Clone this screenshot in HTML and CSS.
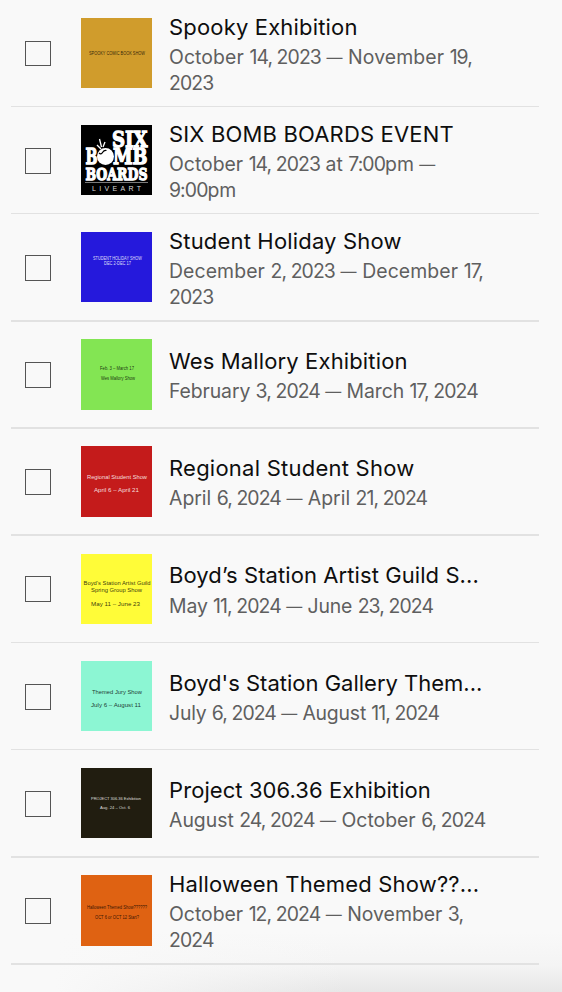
FILE: index.html
```html
<!DOCTYPE html>
<html lang="en">
<head>
<meta charset="utf-8">
<title>Events</title>
<link rel="stylesheet" href="styles.css">
</head>
<body>
<ul class="events">
  <li class="event wrapped">
    <span class="check short"></span>
    <svg class="thumb" viewBox="0 0 71 70"><rect width="71" height="70" fill="#d09c2c"/><text class="dark" x="8" y="37" font-size="4.5" textLength="56" lengthAdjust="spacingAndGlyphs">SPOOKY COMIC BOOK SHOW</text></svg>
    <div class="info"><h2 class="t1">Spooky Exhibition</h2><p class="d1">October <span class="n">14, 2023</span> <i>—</i> November <span class="n">19,</span><br><span class="n">2023</span></p></div>
  </li>
  <li class="event wrapped">
    <span class="check low"></span>
    <svg class="thumb" viewBox="0 0 71 70"><rect width="71" height="70" fill="#000"/>
      <g class="slab"><text x="31" y="21.500" font-size="23" textLength="35.500" lengthAdjust="spacingAndGlyphs">SIX</text><text x="4.500" y="39" font-size="22" textLength="12" lengthAdjust="spacingAndGlyphs">B</text><text x="32" y="39" font-size="22" textLength="34.500" lengthAdjust="spacingAndGlyphs">MB</text><text x="4.500" y="54.500" font-size="17.500" textLength="62" lengthAdjust="spacingAndGlyphs">BOARDS</text></g>
      <circle cx="24.500" cy="31.500" r="8.500" fill="#fff"/><path d="M20 24l-4-4M20.500 22l-2-8M22 22l2-5" stroke="#fff" stroke-width="1.300"/><path d="M18 28q2 2 3.500-.5t4-2" stroke="#000" stroke-width="1.200" fill="none"/>
      <path d="M4 57.500H67" stroke="#999" stroke-width=".8"/><text class="light" x="11" y="65.500" font-size="7" textLength="49">LIVEART</text></svg>
    <div class="info"><h2 class="t2">SIX BOMB BOARDS EVENT</h2><p class="d2">October <span class="n">14, 2023</span> at <span class="n">7:00</span>pm <i>—</i><br><span class="n">9:00</span>pm</p></div>
  </li>
  <li class="event tall wrapped">
    <span class="check low"></span>
    <svg class="thumb" viewBox="0 0 71 70"><rect width="71" height="70" fill="#2519dc"/><text class="light" x="12" y="28" font-size="4.5" textLength="49" lengthAdjust="spacingAndGlyphs">STUDENT HOLIDAY SHOW</text><text class="light" x="23" y="32.700" font-size="4.5" textLength="27" lengthAdjust="spacingAndGlyphs">DEC 2-DEC 17</text></svg>
    <div class="info"><h2 class="t3">Student Holiday Show</h2><p class="d3">December <span class="n">2, 2023</span> <i>—</i> December <span class="n">17,</span><br><span class="n">2023</span></p></div>
  </li>
  <li class="event thick">
    <span class="check"></span>
    <svg class="thumb high" viewBox="0 0 71 71"><rect width="71" height="71" fill="#83e553"/><text class="dark" x="19" y="31" font-size="4.6" textLength="34" lengthAdjust="spacingAndGlyphs">Feb. 3 – March 17</text><text class="dark" x="20" y="40.500" font-size="4.6" textLength="34" lengthAdjust="spacingAndGlyphs">Wes Mallory Show</text></svg>
    <div class="info"><h2 class="t4">Wes Mallory Exhibition</h2><p class="d4">February <span class="n">3, 2024</span> <i>—</i> March <span class="n">17, 2024</span></p></div>
  </li>
  <li class="event thick">
    <span class="check"></span>
    <svg class="thumb high" viewBox="0 0 71 71"><rect width="71" height="71" fill="#c41b1b"/><text class="light" x="6" y="32.500" font-size="5.9" textLength="60" lengthAdjust="spacingAndGlyphs">Regional Student Show</text><text class="light" x="13" y="46" font-size="5.9" textLength="45" lengthAdjust="spacingAndGlyphs">April 6 – April 21</text></svg>
    <div class="info"><h2 class="t5">Regional Student Show</h2><p class="d5">April <span class="n">6, 2024</span> <i>—</i> April <span class="n">21, 2024</span></p></div>
  </li>
  <li class="event">
    <span class="check"></span>
    <svg class="thumb" viewBox="0 0 71 70"><rect width="71" height="70" fill="#fffc38"/><text class="dark" x="2.500" y="31" font-size="5.9" textLength="67" lengthAdjust="spacingAndGlyphs">Boyd’s Station Artist Guild</text><text class="dark" x="10" y="38" font-size="5.9" textLength="51" lengthAdjust="spacingAndGlyphs">Spring Group Show</text><text class="dark" x="10" y="51.500" font-size="5.9" textLength="49" lengthAdjust="spacingAndGlyphs">May 11 – June 23</text></svg>
    <div class="info"><h2 class="t6">Boyd’s Station Artist Guild S...</h2><p class="d6">May <span class="n">11, 2024</span> <i>—</i> June <span class="n">23, 2024</span></p></div>
  </li>
  <li class="event nudged">
    <span class="check low"></span>
    <svg class="thumb" viewBox="0 0 71 70"><rect width="71" height="70" fill="#8cf6d3"/><text class="dark" x="11" y="32.500" font-size="5.9" textLength="50" lengthAdjust="spacingAndGlyphs">Themed Jury Show</text><text class="dark" x="10" y="46" font-size="5.9" textLength="50" lengthAdjust="spacingAndGlyphs">July 6 – August 11</text></svg>
    <div class="info"><h2 class="t7">Boyd's Station Gallery Them...</h2><p class="d7">July <span class="n">6, 2024</span> <i>—</i> August <span class="n">11, 2024</span></p></div>
  </li>
  <li class="event tall nudged">
    <span class="check low"></span>
    <svg class="thumb" viewBox="0 0 71 70"><rect width="71" height="70" fill="#211d10"/><text class="light" x="10" y="31.500" font-size="4.4" textLength="50" lengthAdjust="spacingAndGlyphs">PROJECT 306.36 Exhibition</text><text class="light" x="19" y="41" font-size="4.4" textLength="30" lengthAdjust="spacingAndGlyphs">Aug. 24 – Oct. 6</text></svg>
    <div class="info"><h2 class="t8">Project 306.36 Exhibition</h2><p class="d8">August <span class="n">24, 2024</span> <i>—</i> October <span class="n">6, 2024</span></p></div>
  </li>
  <li class="event thick">
    <span class="check"></span>
    <svg class="thumb high" viewBox="0 0 71 71"><rect width="71" height="71" fill="#df6212"/><text class="dark" x="6" y="34" font-size="4.5" textLength="60" lengthAdjust="spacingAndGlyphs">Halloween Themed Show??????</text><text class="dark" x="14" y="43.500" font-size="4.5" textLength="44" lengthAdjust="spacingAndGlyphs">OCT 6 or OCT 12 Start?</text></svg>
    <div class="info"><h2 class="t9">Halloween Themed Show??...</h2><p class="d9">October <span class="n">12, 2024</span> <i>—</i> November <span class="n">3,</span><br><span class="n">2024</span></p></div>
  </li>
</ul>
</body>
</html>
```
FILE: styles.css
```css
* { box-sizing: border-box; }
body {
  margin: 0;
  height: 992px;
  overflow: hidden;
  font-family: Inter, "Liberation Sans", sans-serif;
  background:
    linear-gradient(90deg, #f9f9f9 10%, rgba(249, 249, 249, 0) 62%) 0 100% / 100% 60px no-repeat,
    linear-gradient(#f9f9f9 932px, #f4f4f4 965px, #e7e7e7 992px);
}
.events { list-style: none; margin: 0; padding: 0 23px 0 11px; }
.event {
  display: flex;
  align-items: center;
  height: 107px;
  padding-left: 14px;
  border-bottom: 1px solid #e2e2e2;
}
.tall { height: 108px; }
.tall, .thick { border-bottom-width: 2px; }
.check { width: 26px; height: 26px; border: 1px solid #555; flex: none; }
.short { height: 25px; }
.low { margin-top: 2px; }
.thumb { width: 71px; height: 70px; margin: 0 17px 0 30px; flex: none; }
.high { height: 71px; }
.thumb text { font-family: "Liberation Sans", sans-serif; }
.thumb .dark { fill: #000; fill-opacity: .8; }
.thumb .light { fill: #fff; fill-opacity: .85; }
.thumb .slab text { font-family: "DejaVu Serif", serif; font-weight: bold; fill: #fff; stroke: #fff; stroke-width: 1.3; }
.info { flex: 1; white-space: nowrap; }
.wrapped .info, .nudged .info { padding-top: 2px; }
h2 { margin: 0; font-size: 22px; font-weight: 400; line-height: 32px; color: #0e0e0e; }
p { margin: 2px 0 0; font-size: 19.4px; line-height: 25.6px; color: #5f5f5f; }
p i { font-style: normal; font-size: 16px; line-height: 1; vertical-align: 1px; }
.n { letter-spacing: -.9px; }
.t1, .t2, .t3, .t9 { letter-spacing: .17px; }
.t4 { letter-spacing: .14px; }
.t5 { letter-spacing: .24px; }
.t6, .t8 { letter-spacing: .08px; }
.d1, .d3 { letter-spacing: .1px; }
.d4, .d6 { letter-spacing: -.1px; }
.d6 { margin-top: 3px; }
.d7 { letter-spacing: -.18px; }
```
